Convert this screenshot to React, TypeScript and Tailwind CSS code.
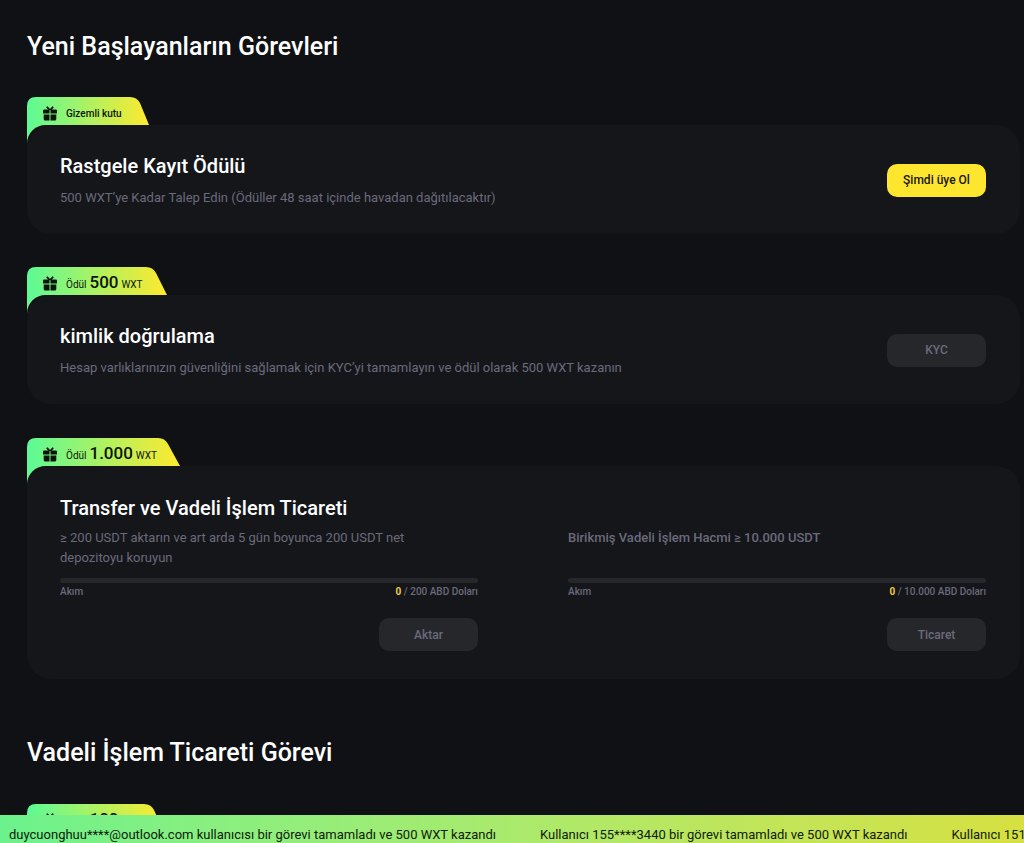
import { useState } from "react"

const FONT = "font-['Roboto','Noto_Sans',sans-serif]"

const notices = [
  "duycuonghuu****@outlook.com kullanıcısı bir görevi tamamladı ve 500 WXT kazandı",
  "Kullanıcı 155****3440 bir görevi tamamladı ve 500 WXT kazandı",
  "Kullanıcı 151****2087 bir görevi tamamladı ve 500 WXT kazandı",
]

function GiftIcon() {
  return (
    <svg width="14" height="15" viewBox="0 0 14 15" fill="#0b1408" aria-hidden="true">
      <path d="M1.200 3.600h5.300V7.500H0V4.800a1.200 1.200 0 0 1 1.200-1.200zM7.500 3.600h5.300A1.200 1.200 0 0 1 14 4.800v2.700H7.500z" />
      <path d="M.700 8.400h5.800v6H2.200a1.500 1.500 0 0 1-1.500-1.500zM7.500 8.400h5.800v4.500a1.500 1.500 0 0 1-1.500 1.500H7.500z" />
      <path d="M6.200 3.300 4.300 1.300M7.800 3.300l1.900-2" stroke="#0b1408" strokeWidth="1.800" strokeLinecap="round" />
    </svg>
  )
}

// Ribbon behind the label, the tail follows the card's rounded corner
function TabShape({ width, id }: { width: number; id: string }) {
  const slant = Math.round(width * 0.09)
  const top = width - slant
  return (
    <svg className="absolute left-0 top-0" width={width} height="47" viewBox={`0 0 ${width} 47`} aria-hidden="true">
      <defs>
        <linearGradient id={id} x1="0" y1="0" x2="1" y2="0">
          <stop offset="0" stopColor="#5cfa96" />
          <stop offset="1" stopColor="#ffe92e" />
        </linearGradient>
      </defs>
      <path
        d={`M0 47V9Q0 0 9 0H${top - 8}Q${top - 1} 0 ${top + 2} 6L${width} 28H19C8 28 0 36 0 47Z`}
        fill={`url(#${id})`}
      />
    </svg>
  )
}

function Tab({ width, id, label, amount }: { width: number; id: string; label: string; amount?: string }) {
  return (
    <div className="relative z-10 h-7">
      <TabShape width={width} id={id} />
      <div className="relative flex h-7 items-center gap-[9px] pl-4 pt-1 text-[10px] text-[#0b1408]">
        <GiftIcon />
        {amount ? (
          <div className="flex items-baseline gap-[3px] leading-4">
            <span>{label}</span>
            <span className="text-[17px] font-medium">{amount}</span>
            <span>WXT</span>
          </div>
        ) : (
          <span className="font-medium">{label}</span>
        )}
      </div>
    </div>
  )
}

function ActionButton({ text, primary, onClick }: { text: string; primary?: boolean; onClick?: () => void }) {
  return (
    <button
      type="button"
      onClick={onClick}
      disabled={!primary}
      className={`h-[33px] w-[99px] shrink-0 rounded-[10px] text-xs font-medium ${
        primary ? "bg-[#ffe62e] text-[#17170f]" : "bg-[#26272b] text-[#6b6a7c]"
      }`}
    >
      {text}
    </button>
  )
}

function TaskCard({ title, text, children }: { title: string; text: string; children: React.ReactNode }) {
  return (
    <div className="flex items-center justify-between rounded-3xl bg-[#15161a] pl-[33px] pr-[34px] pb-[26px] pt-[27px]">
      <div>
        <h3 className="text-xl font-medium leading-7 text-white">{title}</h3>
        <p className="mt-2 text-[13px] leading-5 text-[#6b6a7c]">{text}</p>
      </div>
      {children}
    </div>
  )
}

function Progress({ text, total, button, bold }: { text: string; total: string; button: string; bold?: boolean }) {
  return (
    <div>
      <p className={`h-10 max-w-[380px] text-[13px] leading-5 text-[#6b6a7c] ${bold ? "font-medium" : ""}`}>{text}</p>
      <div className="mt-[10px] h-[5px] rounded-full bg-[#26272b]" />
      <div className="flex justify-between text-[10px] leading-[18px] font-medium text-[#6b6a7c]">
        <span>Akım</span>
        <span>
          <span className="font-bold text-[#f3cc3a]">0</span> / {total}
        </span>
      </div>
      <div className="mt-[17px] flex justify-end">
        <ActionButton text={button} />
      </div>
    </div>
  )
}

export default function App() {
  const [joined, setJoined] = useState(false)

  return (
    <div className={`h-screen overflow-hidden bg-[#101114] text-white ${FONT}`}>
      <main className="pl-[27px] pr-1 pt-[29px]">
        <h2 className="text-[25px] font-medium leading-9">Yeni Başlayanların Görevleri</h2>

        <section className="mt-8">
          <Tab id="tab-box" width={122} label="Gizemli kutu" />
          <TaskCard
            title="Rastgele Kayıt Ödülü"
            text="500 WXT’ye Kadar Talep Edin (Ödüller 48 saat içinde havadan dağıtılacaktır)"
          >
            <ActionButton text="Şimdi üye Ol" primary={!joined} onClick={() => setJoined(true)} />
          </TaskCard>
        </section>

        <section className="mt-[33px]">
          <Tab id="tab-kyc" width={140} label="Ödül" amount="500" />
          <TaskCard
            title="kimlik doğrulama"
            text="Hesap varlıklarınızın güvenliğini sağlamak için KYC’yi tamamlayın ve ödül olarak 500 WXT kazanın"
          >
            <ActionButton text="KYC" />
          </TaskCard>
        </section>

        <section className="mt-[34px]">
          <Tab id="tab-transfer" width={153} label="Ödül" amount="1.000" />
          <div className="rounded-3xl bg-[#15161a] pl-[33px] pr-[34px] pb-7 pt-7">
            <h3 className="text-xl font-medium leading-7">Transfer ve Vadeli İşlem Ticareti</h3>
            <div className="mt-1.5 grid grid-cols-2 gap-[90px]">
              <Progress
                text="≥ 200 USDT aktarın ve art arda 5 gün boyunca 200 USDT net depozitoyu koruyun"
                total="200 ABD Doları"
                button="Aktar"
              />
              <Progress
                text="Birikmiş Vadeli İşlem Hacmi ≥ 10.000 USDT"
                total="10.000 ABD Doları"
                button="Ticaret"
                bold
              />
            </div>
          </div>
        </section>

        <h2 className="mt-14 text-[25px] font-medium leading-9">Vadeli İşlem Ticareti Görevi</h2>
        <section className="mt-[33px]">
          <Tab id="tab-futures" width={137} label="Ödül" amount="100" />
        </section>
      </main>

      <footer className="fixed inset-x-0 bottom-0 z-20 h-7 overflow-hidden bg-linear-to-r from-[#6bf28c] to-[#d6e040]">
        <div className="flex gap-11 whitespace-nowrap pl-[9px] pt-[10px] text-[13px] leading-5 text-[#10200c]">
          {notices.map((notice) => (
            <span key={notice}>{notice}</span>
          ))}
        </div>
      </footer>
    </div>
  )
}
